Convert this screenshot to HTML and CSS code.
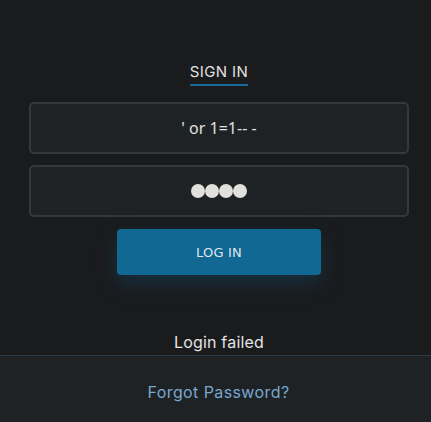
FILE: index.html
```html
<!DOCTYPE html>
<html>
<head>
<meta charset="utf-8">
<link rel="stylesheet" href="styles.css">
</head>
<body>
<main class="page">
  <section class="login">
    <h1 class="title">SIGN IN</h1>
    <input class="field" type="text" value="' or 1=1-- -">
    <div class="field field-pass" aria-label="password"><span class="dot"></span><span class="dot"></span><span class="dot"></span><span class="dot"></span></div>
    <button class="btn">LOG IN</button>
    <p class="status">Login failed</p>
  </section>
  <footer class="footer">
    <a class="forgot" href="#">Forgot Password?</a>
  </footer>
</main>
</body>
</html>
```

FILE: styles.css
```css
* { box-sizing: border-box; }
html, body {
  margin: 0;
  padding: 0;
  height: 100%;
  background: #1a1b1d;
}
.page {
  display: flex;
  flex-direction: column;
  min-height: 422px;
}
.login {
  flex: 1;
  display: flex;
  flex-direction: column;
  align-items: center;
  padding: 62px 22px 0 29px;
}
.title {
  margin: 0 0 16px;
  font-family: "Inter", "Noto Sans", sans-serif;
  font-weight: 400;
  font-size: 15px;
  letter-spacing: 0.4px;
  color: #e2e2e2;
  line-height: 20px;
  padding-bottom: 2px;
  border-bottom: 2px solid #16699a;
}
.field {
  width: 380px;
  height: 52px;
  border: 2px solid #35383a;
  border-radius: 5px;
  background: #1f2224;
  color: #e0e0e0;
  font-family: "Noto Sans", sans-serif;
  font-size: 16px;
  text-align: center;
  outline: none;
  padding: 0 10px;
}
.field + .field { margin-top: 11px; }
.field-pass {
  display: flex;
  align-items: center;
  justify-content: center;
  gap: 0;
}
.dot {
  width: 14px;
  height: 14px;
  border-radius: 50%;
  background: #e2e0dc;
}
.btn {
  margin-top: 12px;
  width: 204px;
  height: 46px;
  border: none;
  border-radius: 4px;
  background: #106893;
  color: #dfe6ec;
  font-family: "DejaVu Sans", sans-serif;
  font-size: 13px;
  letter-spacing: 0.2px;
  box-shadow: 0 8px 22px rgba(20, 90, 130, 0.35);
}
.status {
  margin: 55px 0 0;
  height: 24px;
  font-family: "Inter", "Noto Sans", sans-serif;
  font-size: 16px;
  letter-spacing: 0.2px;
  color: #e4e4e4;
  line-height: 24px;
}
.footer {
  height: 67px;
  border-top: 1px solid #2b3a45;
  background: #1f2224;
  display: flex;
  justify-content: center;
  align-items: center;
  padding: 5px 0 0 6px;
}
.forgot {
  font-family: "Inter", "Noto Sans", sans-serif;
  font-size: 16px;
  letter-spacing: 0.4px;
  color: #78a7cf;
  text-decoration: none;
}
```
